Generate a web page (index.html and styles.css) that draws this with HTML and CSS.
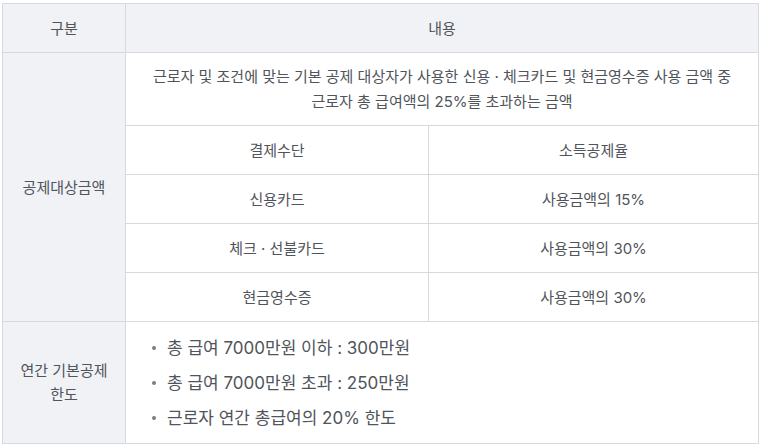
FILE: index.html
```html
<!DOCTYPE html>
<html lang="ko">
<head>
    <meta charset="UTF-8">
    <meta name="viewport" content="width=device-width, initial-scale=1.0">
    <title>신용카드 소득공제</title>
    <link rel="stylesheet" href="styles.css">
</head>
<body>
    <table class="deduction">
        <colgroup>
            <col class="col-label">
            <col class="col-method">
            <col class="col-rate">
        </colgroup>
        <thead>
            <tr class="row-head">
                <th>구분</th>
                <th colspan="2">내용</th>
            </tr>
        </thead>
        <tbody>
            <tr class="row-desc">
                <th rowspan="5">공제대상금액</th>
                <td colspan="2">근로자 및 조건에 맞는 기본 공제 대상자가 사용한 신용 · 체크카드 및 현금영수증 사용 금액 중<br>근로자 총 급여액의 25%를 초과하는 금액</td>
            </tr>
            <tr class="row-item">
                <td>결제수단</td>
                <td>소득공제율</td>
            </tr>
            <tr class="row-item">
                <td>신용카드</td>
                <td>사용금액의 15%</td>
            </tr>
            <tr class="row-item">
                <td>체크 · 선불카드</td>
                <td>사용금액의 30%</td>
            </tr>
            <tr class="row-item">
                <td>현금영수증</td>
                <td>사용금액의 30%</td>
            </tr>
            <tr class="row-limit">
                <th>연간 기본공제 한도</th>
                <td colspan="2" class="limit-cell">
                    <ul class="limit-list">
                        <li>총 급여 7000만원 이하 : 300만원</li>
                        <li>총 급여 7000만원 초과 : 250만원</li>
                        <li>근로자 연간 총급여의 20% 한도</li>
                    </ul>
                </td>
            </tr>
        </tbody>
    </table>
</body>
</html>
```

FILE: styles.css
```css
body {
    margin: 0;
    padding: 3px 0 0 2px;
    background-color: #fff;
    font-family: Inter, "Noto Sans CJK KR", sans-serif;
    color: #50545b;
}
.deduction {
    width: 757px;
    border-collapse: collapse;
    table-layout: fixed;
    font-size: 15px;
    line-height: 25px;
}
.col-label {
    width: 123px;
}
.col-method {
    width: 303px;
}
.deduction th,
.deduction td {
    border: 1px solid #d5d9e0;
    padding: 0 10px;
    text-align: center;
    vertical-align: middle;
    font-weight: normal;
    word-break: keep-all;
}
.deduction th {
    background-color: #f0f2f6;
}
.row-head {
    height: 49px;
}
.row-desc {
    height: 73px;
}
.row-item {
    height: 49px;
}
.row-limit {
    height: 122px;
}
.row-limit th {
    line-height: 24px;
}
.limit-cell {
    text-align: left !important;
}
.limit-list {
    list-style: none;
    margin: 0;
    padding: 0 0 0 16px;
    font-size: 17px;
    line-height: 24px;
    display: flex;
    flex-direction: column;
    gap: 11px;
}
.limit-list li {
    position: relative;
    padding-left: 15px;
}
.limit-list li::before {
    content: "";
    position: absolute;
    left: 0;
    top: 10px;
    width: 4px;
    height: 4px;
    border-radius: 50%;
    background-color: #7a7e85;
}
```
